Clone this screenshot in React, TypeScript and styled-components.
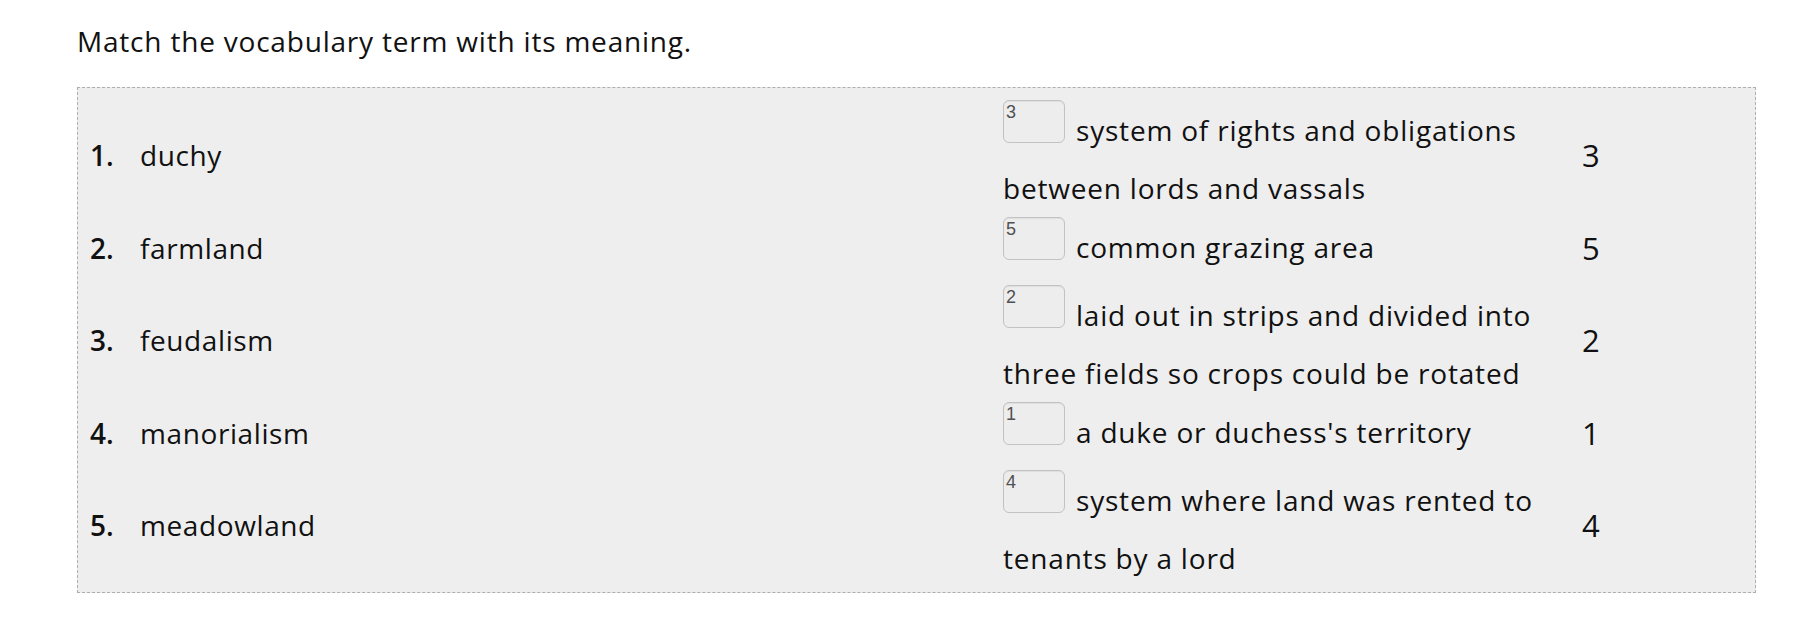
import React from "react";
import styled, { createGlobalStyle } from "styled-components";

const GlobalStyle = createGlobalStyle`
  html, body { margin: 0; padding: 0; background: #ffffff; }
  body { font-family: "Open Sans", Lato, sans-serif; color: #111111; }
`;

const Page = styled.div`
  padding: 19px 0 0 77px;
`;

const Title = styled.h1`
  margin: 0 0 24px;
  font-size: 28px;
  font-weight: 400;
  line-height: 44px;
  letter-spacing: 0.8px;
`;

const Board = styled.div`
  width: 1679px;
  box-sizing: border-box;
  border: 1px dashed #aeaeae;
  background: #eeeeee;
  padding: 12px 0 9px 12px;
  display: flex;
  flex-direction: column;
  gap: 4px;
`;

const Row = styled.div`
  display: grid;
  grid-template-columns: 50px 863px 574px auto;
  align-items: center;
`;

const Num = styled.span`
  font-size: 28px;
  font-weight: 600;
  padding-bottom: 3px;
`;

const Term = styled.span`
  font-size: 28px;
  letter-spacing: 0.6px;
  padding-bottom: 3px;
`;

const Definition = styled.div`
  font-size: 28px;
  line-height: 49px;
  padding-right: 20px;
  letter-spacing: 0.8px;
`;

const AnswerBox = styled.span`
  display: inline-block;
  box-sizing: border-box;
  width: 62px;
  height: 43px;
  margin: 0 11px 21px 0;
  vertical-align: -23px;
  overflow: hidden;
  border: 1px solid #c2c2c2;
  border-radius: 6px;
  background: #ededed;
  box-shadow: inset 0 1px 1px rgba(0, 0, 0, 0.06);
  padding: 2px 0 0 2px;
  font-family: "Liberation Sans", Arial, sans-serif;
  font-size: 18px;
  line-height: 18px;
  letter-spacing: 0;
  color: #505050;
`;

const Answer = styled.span`
  font-size: 31px;
  padding: 0 0 3px 5px;
`;

const items = [
  { n: 1, term: "duchy", box: "3", def: "system of rights and obligations between lords and vassals", ans: "3" },
  { n: 2, term: "farmland", box: "5", def: "common grazing area", ans: "5" },
  { n: 3, term: "feudalism", box: "2", def: "laid out in strips and divided into three fields so crops could be rotated", ans: "2" },
  { n: 4, term: "manorialism", box: "1", def: "a duke or duchess's territory", ans: "1" },
  { n: 5, term: "meadowland", box: "4", def: "system where land was rented to tenants by a lord", ans: "4" },
];

export default function App() {
  return (
    <>
      <GlobalStyle />
      <Page>
        <Title>Match the vocabulary term with its meaning.</Title>
        <Board>
          {items.map((it) => (
            <Row key={it.n}>
              <Num>{it.n}.</Num>
              <Term>{it.term}</Term>
              <Definition>
                <AnswerBox>{it.box}</AnswerBox>
                {it.def}
              </Definition>
              <Answer>{it.ans}</Answer>
            </Row>
          ))}
        </Board>
      </Page>
    </>
  );
}
